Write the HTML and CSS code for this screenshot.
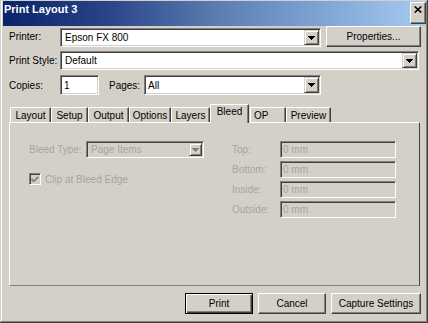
FILE: index.html
```html
<!DOCTYPE html>
<html>
<head>
<meta charset="utf-8">
<title>Print Layout 3</title>
<link rel="stylesheet" href="styles.css">
</head>
<body>
<div class="window">
  <div class="titlebar">
    <span class="title">Print Layout 3</span>
    <div class="close"><svg width="8" height="7" viewBox="0 0 8 7"><path d="M0.7 0.5 L7.3 6.5 M7.3 0.5 L0.7 6.5" stroke="#000" stroke-width="1.6" fill="none"/></svg></div>
  </div>
  <div class="content">
    <div class="row row1">
      <span class="label lw">Printer:</span>
      <div class="field combo printer">
        <span class="val">Epson FX 800</span>
        <span class="drop"><svg width="7" height="4" viewBox="0 0 7 4"><path d="M0 0H7V1H6V2H5V3H4V4H3V3H2V2H1V1H0Z" fill="#000"/></svg></span>
      </div>
      <div class="btn props">Properties...</div>
    </div>
    <div class="row row2">
      <span class="label lw">Print Style:</span>
      <div class="field combo style">
        <span class="val">Default</span>
        <span class="drop"><svg width="7" height="4" viewBox="0 0 7 4"><path d="M0 0H7V1H6V2H5V3H4V4H3V3H2V2H1V1H0Z" fill="#000"/></svg></span>
      </div>
    </div>
    <div class="row row3">
      <span class="label lw">Copies:</span>
      <div class="field copies"><span class="val">1</span></div>
      <span class="label pw">Pages:</span>
      <div class="field combo pages">
        <span class="val">All</span>
        <span class="drop"><svg width="7" height="4" viewBox="0 0 7 4"><path d="M0 0H7V1H6V2H5V3H4V4H3V3H2V2H1V1H0Z" fill="#000"/></svg></span>
      </div>
    </div>
    <div class="tabs">
      <div class="tab t-layout">Layout</div>
      <div class="tab t-setup">Setup</div>
      <div class="tab t-output">Output</div>
      <div class="tab t-options">Options</div>
      <div class="tab t-layers">Layers</div>
      <div class="tab sel t-bleed">Bleed</div>
      <div class="tab t-op">OP</div>
      <div class="tab t-preview">Preview</div>
    </div>
    <div class="panel">
      <div class="lcol">
        <div class="brow">
          <span class="label dis bt">Bleed Type:</span>
          <div class="field combo disabled btype">
            <span class="val">Page Items</span>
            <span class="drop small"><svg width="7" height="4" viewBox="0 0 7 4"><path d="M0 0H7V1H6V2H5V3H4V4H3V3H2V2H1V1H0Z" fill="#808080"/></svg></span>
          </div>
        </div>
        <div class="crow">
          <span class="check"><svg width="8" height="7" viewBox="0 0 8 7"><path d="M0.5 3 L2.8 5.3 L7.3 0.8" stroke="#808080" stroke-width="1.8" fill="none"/></svg></span>
          <span class="label dis">Clip at Bleed Edge</span>
        </div>
      </div>
      <div class="rcol">
        <span class="label dis">Top:</span>
        <div class="field disabled num"><span class="val">0 mm</span></div>
        <span class="label dis">Bottom:</span>
        <div class="field disabled num"><span class="val">0 mm</span></div>
        <span class="label dis">Inside:</span>
        <div class="field disabled num"><span class="val">0 mm</span></div>
        <span class="label dis">Outside:</span>
        <div class="field disabled num"><span class="val">0 mm</span></div>
      </div>
    </div>
    <div class="actions">
      <div class="btn def print">Print</div>
      <div class="btn cancel">Cancel</div>
      <div class="btn capture">Capture Settings</div>
    </div>
  </div>
</div>
</body>
</html>
```
FILE: styles.css
```css
* { box-sizing: border-box; margin: 0; padding: 0; }
html, body { width: 428px; height: 323px; overflow: hidden; background: #d4d0c8; }
body {
  font-family: "Liberation Sans", Arial, sans-serif;
  font-size: 10px;
  color: #000;
}
.window {
  width: 428px;
  height: 323px;
  background: #d4d0c8;
  padding: 1px 2px 2px 3px;
  display: flex;
  flex-direction: column;
  box-shadow: inset -1px -1px #404040, inset 1px 1px #d4d0c8, inset -2px -2px #808080, inset 2px 2px #ffffff;
}
.titlebar {
  flex: none;
  height: 25px;
  display: flex;
  align-items: flex-start;
  justify-content: space-between;
  padding: 2px 0 0 1px;
  background: linear-gradient(to right, #0a246a 0%, #2a4488 25%, #5a7cb0 50%, #7fa4d4 75%, #a6caf0 100%);
}
.title {
  color: #fff;
  font-weight: bold;
  font-size: 11px;
  line-height: 13px;
}
.close {
  width: 16px;
  height: 22px;
  margin-top: -1px;
  background: #d4d0c8;
  border: 1px solid;
  border-color: #ffffff #404040 #404040 #ffffff;
  box-shadow: inset -1px -1px #808080;
  display: flex;
  justify-content: center;
  align-items: flex-start;
  padding-top: 3px;
}
.close svg { display: block; }
.content {
  flex: 1;
  display: flex;
  flex-direction: column;
  padding: 0 5px 0 6px;
}
.row { display: flex; align-items: center; flex: none; }
.row1 { height: 21px; }
.row2 { height: 19px; margin-top: 4px; }
.row3 { height: 20px; margin-top: 5px; }
.label { white-space: nowrap; }
.lw { width: 51px; }
.pw { width: 35px; margin-left: 10px; }
.dis { color: #a4a4a4; }

.field {
  background: #ffffff;
  border: 1px solid;
  border-color: #808080 #ffffff #ffffff #808080;
  box-shadow: inset 1px 1px #404040, inset -1px -1px #d4d0c8;
  display: flex;
  align-items: center;
  padding: 1px 1px 1px 4px;
  white-space: nowrap;
}
.field.disabled { background: #d4d0c8; color: #a4a4a4; }
.drop {
  margin-left: auto;
  width: 15px;
  height: 15px;
  background: #d4d0c8;
  border: 1px solid;
  border-color: #d4d0c8 #404040 #404040 #d4d0c8;
  box-shadow: inset 1px 1px #ffffff, inset -1px -1px #808080;
  display: flex;
  align-items: center;
  justify-content: center;
}
.drop svg { display: block; }
.drop.small { width: 13px; height: 13px; }
.printer { width: 261px; height: 19px; align-self: flex-end; }
.style { width: 359px; height: 19px; }
.copies { width: 39px; height: 20px; padding-left: 3px; }
.pages { width: 177px; height: 20px; padding-left: 3px; }
.pages .drop { height: 16px; }

.btn {
  background: #d4d0c8;
  border: 1px solid;
  border-color: #ffffff #404040 #404040 #ffffff;
  box-shadow: inset -1px -1px #808080;
  height: 21px;
  display: flex;
  align-items: center;
  justify-content: center;
  white-space: nowrap;
}
.btn.def {
  border-color: #000000;
  box-shadow: inset 1px 1px #ffffff, inset -1px -1px #404040, inset -2px -2px #808080;
}
.props { width: 95px; margin-left: 5px; align-self: flex-start; }

.tabs {
  flex: none;
  display: flex;
  align-items: flex-end;
  height: 18px;
  margin-top: 9px;
  padding-left: 1px;
}
.tab {
  height: 15px;
  border: 1px solid;
  border-bottom: none;
  border-color: #ffffff #404040 #404040 #ffffff;
  box-shadow: inset -1px 0 #808080;
  text-align: center;
  line-height: 13px;
  padding-top: 1px;
  white-space: nowrap;
}
.tab.sel {
  height: 19px;
  margin-bottom: -1px;
  padding-top: 0;
  position: relative;
  background: #d4d0c8;
}
.t-layout { width: 41px; }
.t-setup { width: 37px; }
.t-output { width: 41px; }
.t-options { width: 42px; }
.t-layers { width: 39px; }
.t-bleed { width: 39px; }
.t-op { width: 36px; margin-left: 1px; text-align: left; padding-left: 3px; }
.t-preview { width: 45px; }

.panel {
  flex: none;
  width: 411px;
  height: 164px;
  border: 1px solid;
  border-color: #ffffff #404040 #808080 #ffffff;
  display: flex;
  align-items: flex-start;
  padding: 18px 0 0 19px;
}
.lcol { width: 203px; display: flex; flex-direction: column; }
.brow { display: flex; align-items: center; height: 17px; }
.bt { width: 57px; }
.btype { width: 118px; height: 17px; }
.crow { display: flex; align-items: center; gap: 4px; margin-top: 15px; height: 12px; }
.check {
  width: 12px;
  height: 12px;
  background: #d4d0c8;
  border: 1px solid;
  border-color: #808080 #ffffff #ffffff #808080;
  box-shadow: inset 1px 1px #404040, inset -1px -1px #d4d0c8;
  display: flex;
  align-items: center;
  justify-content: center;
}
.check svg { display: block; }
.rcol {
  display: grid;
  grid-template-columns: 48px 116px;
  grid-auto-rows: 17px;
  row-gap: 3px;
  align-items: center;
}
.num { height: 17px; padding-left: 2px; }

.actions {
  flex: none;
  display: flex;
  justify-content: flex-end;
  gap: 5px;
  margin-top: 7px;
}
.print { width: 68px; }
.cancel { width: 68px; }
.capture { width: 90px; }
```
